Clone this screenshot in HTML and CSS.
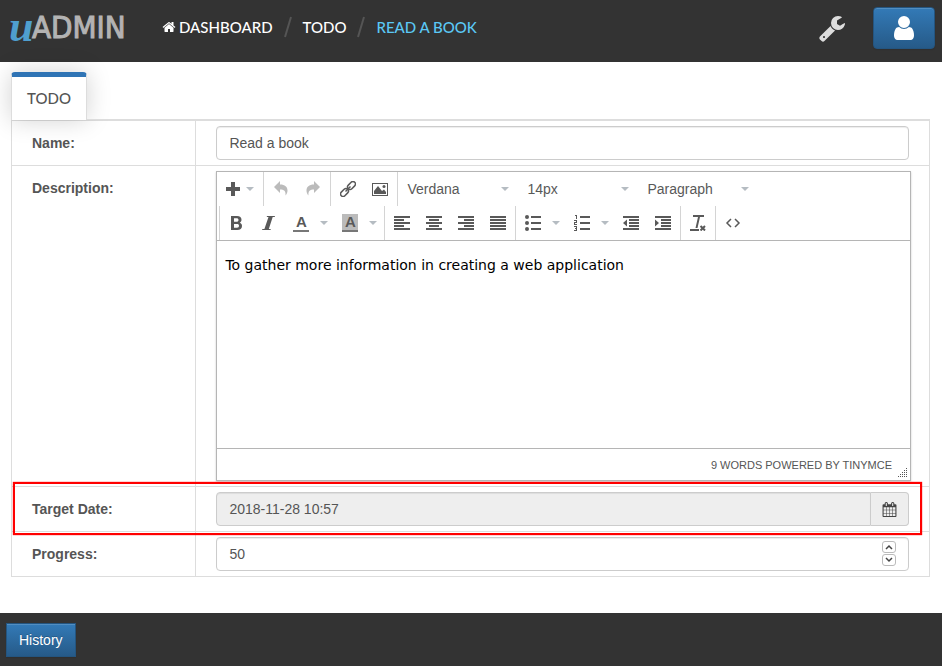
FILE: index.html
```html
<!DOCTYPE html>
<html lang="en">
<head>
<meta charset="utf-8">
<title>uAdmin - Read a book</title>
<link rel="stylesheet" href="styles.css">
</head>
<body>
<header class="topbar">
  <a class="logo" href="#" aria-label="uAdmin"><span class="logo-u">u</span><span class="logo-admin">ADMIN</span></a>
  <nav class="crumbs">
    <a href="#"><svg class="home" viewBox="0 0 1792 1792"><path d="M1472 992v480q0 26-19 45t-45 19h-384v-384h-256v384h-384q-26 0-45-19t-19-45v-480q0-1 .5-3t.5-3l575-474 575 474q1 2 1 6zm223-69l-62 74q-8 9-21 11h-3q-13 0-21-7l-692-577-692 577q-12 8-24 7-13-2-21-11l-62-74q-8-10-7-23.500t11-21.500l719-599q32-26 76-26t76 26l244 204v-195q0-14 9-23t23-9h192q14 0 23 9t9 23v408l219 182q10 8 11 21.500t-7 23.500z"/></svg>DASHBOARD</a>
    <svg class="slash" viewBox="0 0 8 22"><path d="M7 1 1 21"/></svg>
    <a href="#">TODO</a>
    <svg class="slash" viewBox="0 0 8 22"><path d="M7 1 1 21"/></svg>
    <a class="current" href="#">READ A BOOK</a>
  </nav>
  <div class="actions">
    <a class="wrench" href="#" aria-label="Settings"><svg viewBox="0 0 1792 1792"><path d="M448 1472q0-26-19-45t-45-19-45 19-19 45 19 45 45 19 45-19 19-45zm644-420l-682 682q-37 37-90 37-52 0-91-37l-106-108q-38-36-38-90 0-53 38-91l681-681q39 98 114.500 173.500t173.500 114.500zm634-435q0 39-23 106-47 134-164.500 217.500t-258.500 83.500q-185 0-316.500-131.500t-131.500-316.500 131.500-316.500 316.500-131.500q58 0 121.500 16.500t107.500 46.500q16 11 16 28t-16 28l-293 169v224l193 107q5-3 79-48.500t135.500-81 70.500-35.500q15 0 23.500 10t8.500 25z"/></svg></a>
    <button class="btn user" type="button" aria-label="Account"><svg viewBox="0 0 1792 1792"><path d="M1536 1399q0 109-62.500 187t-150.500 78h-854q-88 0-150.500-78t-62.500-187q0-85 8.500-160.500t31.500-152 58.500-131 94-89 134.500-34.500q131 128 313 128t313-128q76 0 134.500 34.500t94 89 58.500 131 31.500 152 8.500 160.500zm-256-887q0 159-112.500 271.500t-271.500 112.500-271.500-112.500-112.500-271.500 112.500-271.500 271.500-112.500 271.500 112.500 112.500 271.500z"/></svg></button>
  </div>
</header>

<main>
  <div class="tabs"><a class="tab" href="#">TODO</a><span class="tab-line"></span></div>
  <form class="fields">
    <div class="row">
      <label for="name">Name:</label>
      <div class="cell"><input class="control" id="name" type="text" value="Read a book"></div>
    </div>
    <div class="row">
      <label for="description">Description:</label>
      <div class="cell">
        <div class="editor">
          <div class="toolbar">
            <div class="bar">
              <div class="group first"><button type="button" class="menu" aria-label="Insert"><svg viewBox="0 0 16 16"><path d="M6 1h4v5h5v4h-5v5H6v-5H1V6h5z"/></svg><i class="caret"></i></button></div>
              <div class="group">
                <button type="button" class="off" aria-label="Undo"><svg viewBox="0 0 16 16"><path d="M7 0v3.500c5 0 7.500 2.500 7.500 6 0 2-.8 3.700-2 5 .5-4.500-1.500-6-5.500-6V12L1 6z"/></svg></button>
                <button type="button" class="off" aria-label="Redo"><svg viewBox="0 0 16 16"><path d="M9 0v3.500c-5 0-7.500 2.500-7.500 6 0 2 .8 3.700 2 5-.5-4.500 1.500-6 5.500-6V12l6-6z"/></svg></button>
              </div>
              <div class="group">
                <button type="button" aria-label="Link"><svg class="line" viewBox="0 0 16 16"><rect x="7" y="2" width="9" height="5" rx="2.500" transform="rotate(-45 11.500 4.500)"/><rect x="0" y="9" width="9" height="5" rx="2.500" transform="rotate(-45 4.500 11.500)"/><path d="m5.500 10.500 5-5"/></svg></button>
                <button type="button" aria-label="Image"><svg viewBox="0 0 16 16"><path fill-rule="evenodd" d="M0 2h16v13H0zM1 3v11h14V3z"/><path d="M2 13V10l4-5 4 5 2-1.500 2 2.500v2z"/><circle cx="12" cy="5.500" r="1.500"/></svg></button>
              </div>
              <div class="group">
                <span class="listbox"><select aria-label="Font"><option>Verdana</option></select><i class="caret"></i></span>
                <span class="listbox"><select aria-label="Font size"><option>14px</option></select><i class="caret"></i></span>
                <span class="listbox"><select aria-label="Block format"><option>Paragraph</option></select><i class="caret"></i></span>
              </div>
            </div>
            <div class="bar second">
              <div class="group">
                <button type="button" aria-label="Bold"><svg viewBox="0 0 16 16"><path fill-rule="evenodd" d="M2 1h6c3 0 4.500 1.500 4.500 3.700 0 1.400-.7 2.400-1.800 3 1.500.5 2.300 1.600 2.300 3.200C13 13.500 11.300 15 8.200 15H2zM5 3.300v3.500h2.500c1.300 0 2-.6 2-1.800s-.7-1.700-2-1.700zM5 9v3.700h3c1.300 0 2-.6 2-1.900S9.300 9 8 9z"/></svg></button>
                <button type="button" aria-label="Italic"><svg viewBox="0 0 16 16"><path d="M6 1h8l-.3 1h-2L7.800 14h2l-.3 1H1l.4-1h2L7.500 2H5.700z"/></svg></button>
                <button type="button" class="split" aria-label="Text color"><span class="swatch">A</span><i class="caret"></i></button>
                <button type="button" class="split" aria-label="Background color"><span class="swatch filled">A</span><i class="caret"></i></button>
              </div>
              <div class="group">
                <button type="button" aria-label="Align left"><svg viewBox="0 0 16 16"><path d="M0 1h16v2H0zm0 3h10v2H0zm0 3h16v2H0zm0 3h10v2H0zm0 3h16v2H0z"/></svg></button>
                <button type="button" aria-label="Align center"><svg viewBox="0 0 16 16"><path d="M0 1h16v2H0zm3 3h10v2H3zM0 7h16v2H0zm3 3h10v2H3zm-3 3h16v2H0z"/></svg></button>
                <button type="button" aria-label="Align right"><svg viewBox="0 0 16 16"><path d="M0 1h16v2H0zm6 3h10v2H6zM0 7h16v2H0zm6 3h10v2H6zm-6 3h16v2H0z"/></svg></button>
                <button type="button" aria-label="Justify"><svg viewBox="0 0 16 16"><path d="M0 1h16v2H0zm0 3h16v2H0zm0 3h16v2H0zm0 3h16v2H0zm0 3h16v2H0z"/></svg></button>
              </div>
              <div class="group">
                <button type="button" class="split" aria-label="Bullet list"><svg viewBox="0 0 16 16"><path d="M6 1h10v2H6zm0 6h10v2H6zm0 6h10v2H6z"/><circle cx="2" cy="2" r="2"/><circle cx="2" cy="8" r="2"/><circle cx="2" cy="14" r="2"/></svg><i class="caret"></i></button>
                <button type="button" class="split" aria-label="Numbered list"><svg viewBox="0 0 16 16"><path d="M6 1h10v2H6zm0 6h10v2H6zm0 6h10v2H6zM1 0h2v4H2V1H1zM0 5h3v3H1v1h2v1H0V7h2V6H0zM0 11h3v5H0v-1h2v-1H1v-1h1v-1H0z"/></svg><i class="caret"></i></button>
                <button type="button" aria-label="Outdent"><svg viewBox="0 0 16 16"><path d="M0 1h16v2H0zm6 3h10v2H6zm0 3h10v2H6zm0 3h10v2H6zm-6 3h16v2H0zM4 4.500v7L0 8z"/></svg></button>
                <button type="button" aria-label="Indent"><svg viewBox="0 0 16 16"><path d="M0 1h16v2H0zm6 3h10v2H6zm0 3h10v2H6zm0 3h10v2H6zm-6 3h16v2H0zM0 4.500v7L4 8z"/></svg></button>
              </div>
              <div class="group"><button type="button" aria-label="Clear formatting"><svg viewBox="0 0 16 16"><path d="M3 0h11v2h-4L7.500 13h-2L8 2H3zM0 14h9v2H0z"/><path class="stroke" d="m10.500 11 4.500 4.500M15 11l-4.500 4.500"/></svg></button></div>
              <div class="group"><button type="button" aria-label="Source code"><svg class="thin" viewBox="0 0 16 16"><path d="M6 4 2 8l4 4m4-8 4 4-4 4"/></svg></button></div>
            </div>
          </div>
          <textarea id="description">To gather more information in creating a web application</textarea>
          <div class="status"><span>9 WORDS POWERED BY TINYMCE</span><svg class="grip" viewBox="0 0 10 10"><path d="M8 0h1v1H8zM6 2h1v1H6zm2 0h1v1H8zM4 4h1v1H4zm2 0h1v1H6zm2 0h1v1H8zM2 6h1v1H2zm2 0h1v1H4zm2 0h1v1H6zm2 0h1v1H8zM0 8h1v1H0zm2 0h1v1H2zm2 0h1v1H4zm2 0h1v1H6zm2 0h1v1H8z"/></svg></div>
        </div>
      </div>
    </div>
    <div class="row marked">
      <label for="date">Target Date:</label>
      <div class="cell">
        <div class="addon-group">
          <input class="control" id="date" type="text" value="2018-11-28 10:57" readonly>
          <button class="addon" type="button" aria-label="Choose date"><svg viewBox="0 0 1792 1792"><path d="M192 1664h288v-288h-288v288zm352 0h320v-288h-320v288zm-352-352h288v-320h-288v320zm352 0h320v-320h-320v320zm-352-384h288v-288h-288v288zm736 736h320v-288h-320v288zm-384-736h320v-288h-320v288zm768 736h288v-288h-288v288zm-384-352h320v-320h-320v320zm-352-864v-288q0-13-9.500-22.500t-22.500-9.500h-64q-13 0-22.500 9.500t-9.500 22.500v288q0 13 9.500 22.500t22.500 9.500h64q13 0 22.500-9.500t9.500-22.500zm736 864h288v-320h-288v320zm-384-384h320v-288h-320v288zm384 0h288v-288h-288v288zm32-480v-288q0-13-9.500-22.500t-22.500-9.500h-64q-13 0-22.500 9.500t-9.500 22.500v288q0 13 9.500 22.500t22.500 9.500h64q13 0 22.500-9.500t9.500-22.500zm384-64v1280q0 52-38 90t-90 38h-1408q-52 0-90-38t-38-90v-1280q0-52 38-90t90-38h128v-96q0-66 47-113t113-47h64q66 0 113 47t47 113v96h384v-96q0-66 47-113t113-47h64q66 0 113 47t47 113v96h128q52 0 90 38t38 90z"/></svg></button>
        </div>
      </div>
    </div>
    <div class="row">
      <label for="progress">Progress:</label>
      <div class="cell">
        <div class="number">
          <input class="control" id="progress" type="number" value="50">
          <div class="spin">
            <button type="button" aria-label="Increase"><svg viewBox="0 0 8 6"><path d="m1 5 3-3 3 3"/></svg></button>
            <button type="button" aria-label="Decrease"><svg viewBox="0 0 8 6"><path d="m1 1 3 3 3-3"/></svg></button>
          </div>
        </div>
      </div>
    </div>
  </form>
</main>

<footer><button class="btn history" type="button">History</button></footer>
</body>
</html>
```
FILE: styles.css
```css
* { box-sizing: border-box; }

body {
  margin: 0;
  min-height: 100vh;
  display: flex;
  flex-direction: column;
  background: #fff;
  color: #555;
  font: 14px/20px "Liberation Sans", Arial, sans-serif;
}

a { color: inherit; text-decoration: none; }
button, input, select, textarea { font: inherit; color: inherit; margin: 0; }
svg { display: block; fill: currentColor; flex: none; }

/* Header */
.topbar {
  display: flex;
  height: 62px;
  padding: 0 7px 0 9px;
  background: #333;
  color: #fff;
}
.logo {
  display: flex;
  width: 153px;
  height: 54px;
  align-items: center;
  color: #b3b3b3;
}
.logo-u {
  width: 23px;
  color: #4f9fcf;
  font: italic bold 44px/54px "Liberation Serif", serif;
}
.logo-admin {
  font: 31px/54px "DejaVu Sans Condensed", "DejaVu Sans", sans-serif;
  -webkit-text-stroke: 1px #b3b3b3;
}
.crumbs {
  display: flex;
  height: 54px;
  align-items: center;
  gap: 11px;
  font: 500 15px/20px Lato, sans-serif;
}
.crumbs a { display: flex; align-items: center; gap: 3px; }
.crumbs .current { color: #5bc8f5; }
.home { width: 14px; height: 14px; }
.slash { width: 8px; height: 22px; fill: none; stroke: #555; stroke-width: 2; }
.actions {
  display: flex;
  align-items: center;
  height: 56px;
  margin-left: auto;
  gap: 27px;
}
.actions svg { width: 28px; height: 28px; }
.wrench { color: #ddd; }

.btn {
  border: 1px solid #245580;
  background: linear-gradient(#337ab7, #265a88);
  box-shadow: inset 0 1px 0 rgba(255, 255, 255, .15), 0 1px 1px rgba(0, 0, 0, .08);
  color: #fff;
  text-shadow: 0 -1px 0 rgba(0, 0, 0, .2);
}
.user {
  display: flex;
  align-items: center;
  justify-content: center;
  width: 62px;
  height: 42px;
  padding: 0;
  border-radius: 4px;
}
.history { height: 34px; padding: 0 12px; }

/* Tabs */
main { flex: 1; padding: 10px 12px 36px 11px; }
.tabs { display: flex; align-items: flex-end; height: 48px; }
.tab {
  height: 48px;
  padding: 11px 15px 0;
  border: 1px solid #ddd;
  border-top: 5px solid #2f74b5;
  border-bottom: 0;
  border-radius: 4px 4px 0 0;
  box-shadow: 0 0 24px rgba(0, 0, 0, .18);
  background: #fff;
  font: 500 15px/20px Lato, sans-serif;
}
.tab-line { flex: 1; border-bottom: 1px solid #ddd; }

/* Form rows */
.fields { border: 1px solid #ddd; border-bottom: 0; }
.row {
  position: relative;
  display: flex;
  border-bottom: 1px solid #ddd;
}
.row > label { width: 20%; padding: 12px 20px; font-weight: bold; }
.cell { flex: 1; padding: 5px 20px; border-left: 1px solid #ddd; min-width: 0; }
.control {
  display: block;
  width: 100%;
  height: 34px;
  padding: 6px 12px;
  border: 1px solid #ccc;
  border-radius: 4px;
  background: #fff;
  box-shadow: inset 0 1px 1px rgba(0, 0, 0, .075);
}
.marked::after {
  content: "";
  position: absolute;
  z-index: 1;
  inset: -5px 7px -4px 1px;
  border: 2px solid #f00;
  box-shadow: 0 0 1px #f00;
  pointer-events: none;
}
.addon-group { display: flex; }
.addon-group .control {
  flex: 1;
  min-width: 0;
  background: #eee;
  border-radius: 4px 0 0 4px;
}
.addon {
  width: 38px;
  padding: 0 11px;
  border: 1px solid #ccc;
  border-left: 0;
  border-radius: 0 4px 4px 0;
  background: #eee;
  color: #444;
}
.addon svg { width: 15px; height: 15px; }
.number { position: relative; }
.number .control { appearance: textfield; }
.spin {
  position: absolute;
  top: 4px;
  right: 13px;
  display: flex;
  flex-direction: column;
  gap: 1px;
}
.spin button {
  display: flex;
  align-items: center;
  justify-content: center;
  width: 14px;
  height: 12px;
  padding: 0;
  border: 1px solid #bbb;
  border-radius: 3px;
  background: #fff;
}
.spin svg { width: 8px; height: 6px; fill: none; stroke: #444; stroke-width: 1.5; }

/* Rich text editor */
.editor {
  box-sizing: content-box;
  width: 100%;
  border: 1px solid #b5b5b5;
  box-shadow: 0 1px 2px rgba(0, 0, 0, .2);
}
.toolbar { border-bottom: 1px solid #b5b5b5; color: #595959; }
.bar { display: flex; height: 34px; }
.second { padding-left: 2px; }
.group { display: flex; padding: 0 1px; border-left: 1px solid #d4d4d4; }
.group.first { padding: 0; border-left: 0; }
.group button {
  display: flex;
  align-items: center;
  width: 32px;
  height: 33px;
  padding: 0 8px;
  border: 0;
  background: none;
}
.group svg { width: 16px; height: 16px; }
.group .menu { width: 46px; gap: 5px; }
.group .split { width: 49px; gap: 11px; }
.group .off { color: #bbb; }
.stroke { fill: none; stroke: currentColor; stroke-width: 2; }
.group .line, .group .thin { fill: none; stroke: currentColor; stroke-width: 1.5; }
.caret {
  flex: none;
  border: 4px solid transparent;
  border-top-color: #b5bcc2;
  border-bottom: 0;
}
.swatch {
  flex: none;
  width: 16px;
  height: 18px;
  border-bottom: 2px solid #777;
  font: bold 15px/16px "Liberation Sans", Arial, sans-serif;
}
.filled { background: #bbb; }
.listbox { position: relative; width: 120px; }
.listbox select {
  appearance: none;
  width: 100%;
  height: 34px;
  padding: 0 24px 0 8px;
  border: 0;
  background: none;
}
.listbox .caret { position: absolute; right: 10px; top: 15px; pointer-events: none; }
.editor textarea {
  display: block;
  width: 100%;
  height: 207px;
  padding: 14px 8px;
  border: 0;
  resize: none;
  color: #000;
  font: 14px/20px "DejaVu Sans", Verdana, sans-serif;
}
.status {
  display: flex;
  justify-content: flex-end;
  align-items: center;
  gap: 6px;
  height: 32px;
  padding-right: 2px;
  border-top: 1px solid #b5b5b5;
  font-size: 11px;
}
.grip { width: 10px; height: 10px; align-self: flex-end; margin-bottom: 2px; }

footer { padding: 10px 6px 9px; background: #333; }
footer .btn { display: block; }
```
